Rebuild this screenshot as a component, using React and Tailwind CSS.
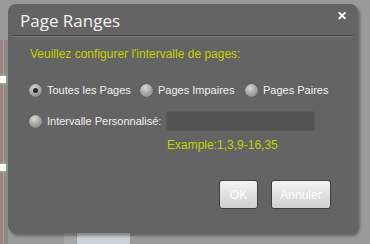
import React from "react";

function Radio({ checked }) {
  return (
    <span className="relative inline-flex shrink-0 w-[13px] h-[13px] rounded-full bg-[radial-gradient(circle_at_40%_30%,#d8d8d8,#a0a0a0_55%,#7c7c7c)] shadow-[0_0_1px_rgba(0,0,0,0.5)] items-center justify-center">
      {checked && <span className="w-[5px] h-[5px] rounded-full bg-[#2a2a2a]" />}
    </span>
  );
}

export default function App() {
  const font = { fontFamily: '"Liberation Sans", Arial, sans-serif' };
  return (
    <div className="relative w-[370px] h-[244px] bg-[#9a9a9a] overflow-hidden" style={font}>
      {/* background bits behind the dialog */}
      <div className="absolute left-0 top-[40px] w-[8px] h-[204px] bg-[#8a8a8a]" />
      <div className="absolute left-[3px] top-[40px] w-[1px] h-[204px] bg-[#e08080]" />
      <div className="absolute left-0 top-[76px] w-[6px] h-[7px] bg-white shadow-[0_0_4px_#7f7]" />
      <div className="absolute left-0 top-[164px] w-[6px] h-[7px] bg-white shadow-[0_0_4px_#7f7]" />
      <div className="absolute left-[64px] top-[232px] w-[12px] h-[12px] bg-[#a8a8a8]" />
      <div className="absolute left-[77px] top-[232px] w-[53px] h-[12px] bg-[#c9d0d6]" />

      <div className="relative ml-[8px] pt-[4px]">
        <div className="w-[350px] h-[229px] rounded-[8px] bg-[#646464] shadow-[2px_3px_3px_rgba(0,0,0,0.35)] flex flex-col whitespace-nowrap">
          {/* title */}
          <div className="flex items-start justify-between pl-[12px] pr-[11px] pt-[6px]">
            <span className="text-[17px] leading-[22px] text-[#f2f2f2]" style={{ fontFamily: '"Open Sans", sans-serif' }}>
              Page Ranges
            </span>
            <span className="text-[12px] font-bold text-white leading-[12px] mt-0">✕</span>
          </div>
          <div className="mx-[5px] mt-[3px] h-[2px] border-t border-[#454545] border-b border-b-[#7a7a7a]" />

          <div className="pl-[22px] mt-[10px] text-[12px] leading-[14px] text-[#c5d100]">
            Veuillez configurer l'intervalle de pages:
          </div>

          <div className="text-[11px] text-[#f0f0f0] pl-[21px]">
            <div className="flex items-center mt-[22px] h-[14px]">
              <Radio checked />
              <span className="ml-[5px] w-[93px]">Toutes les Pages</span>
              <Radio />
              <span className="ml-[5px] w-[87px]">Pages Impaires</span>
              <Radio />
              <span className="ml-[5px]">Pages Paires</span>
            </div>
            <div className="flex items-center mt-[14px] h-[20px]">
              <Radio />
              <span className="ml-[5px] w-[119px]">Intervalle Personnalisé:</span>
              <div className="w-[149px] h-[20px] bg-[#535353] border border-[#5c5c5c]" />
            </div>
            <div className="ml-[138px] mt-[7px] text-[12px] leading-[14px] text-[#c5d100]">
              Example:1,3,9-16,35
            </div>
          </div>

          <div className="flex justify-end gap-[13px] pr-[27px] mt-[28px]">
            <button className="w-[39px] h-[29px] rounded-[3px] border border-[#3e3e3e] bg-gradient-to-b from-[#f4f4f4] to-[#cfcfcf] text-[12px] text-white">
              OK
            </button>
            <button className="w-[60px] h-[29px] rounded-[3px] border border-[#3e3e3e] bg-gradient-to-b from-[#f4f4f4] to-[#cfcfcf] text-[12px] text-white">
              Annuler
            </button>
          </div>
        </div>
      </div>
    </div>
  );
}
